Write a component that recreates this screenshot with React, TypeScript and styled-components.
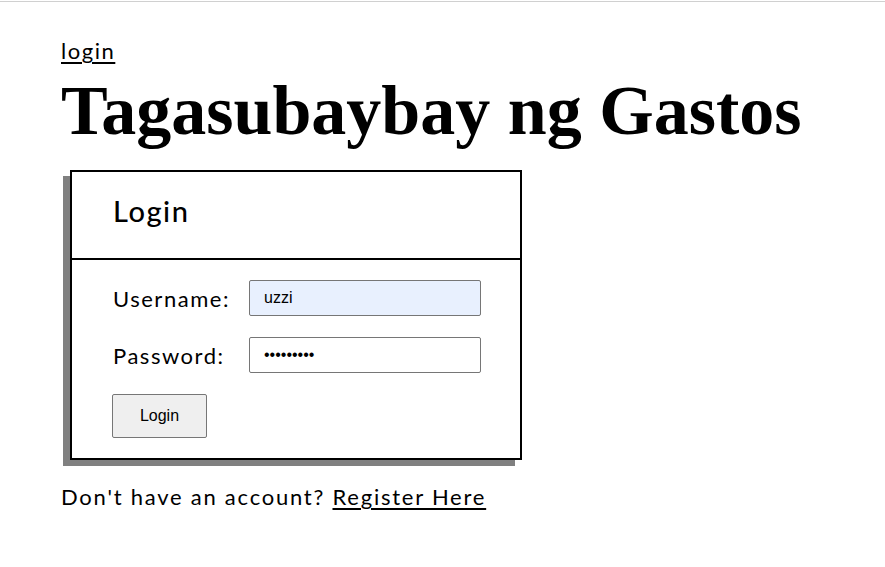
import React from "react";
import styled, { createGlobalStyle } from "styled-components";

const Global = createGlobalStyle`
  html, body { margin: 0; padding: 0; background: #fff; }
  body { border-top: 1px solid #d0d0d0; margin-top: 1px; }
`;

const Page = styled.main`
  padding: 34px 0 0 61px;
  font-family: "Lato", "Open Sans", sans-serif;
  letter-spacing: 0.095em;
  color: #000;
`;

const NavLink = styled.a`
  display: inline-block;
  font-size: 22px;
  line-height: 30px;
  letter-spacing: 0.07em;
  color: #000;
  text-decoration: underline;
  text-underline-offset: 3px;
`;

const Title = styled.h1`
  margin: 9px 0 23px 0;
  font-family: "Liberation Serif", "DejaVu Serif", serif;
  font-weight: 700;
  font-size: 70px;
  line-height: 72px;
  letter-spacing: 0;
`;

const Card = styled.section`
  margin-left: 9px;
  width: 448px;
  border: 2px solid #000;
  box-shadow: -7px 6px 0 #808080;
  background: #fff;
`;

const CardHeader = styled.header`
  box-sizing: border-box;
  height: 88px;
  display: flex;
  align-items: center;
  padding: 0 0 10px 41px;
  border-bottom: 2px solid #000;
  font-size: 29px;
  font-weight: 500;
`;

const CardBody = styled.form`
  padding: 20px 0 20px 40px;
  display: flex;
  flex-direction: column;
  gap: 21px;
`;

const Row = styled.label`
  display: flex;
  align-items: center;
  font-size: 22px;
  padding-left: 1px;
`;

const LabelText = styled.span`
  width: 136px;
`;

const Input = styled.input<{ $autofill?: boolean }>`
  box-sizing: border-box;
  width: 232px;
  height: 36px;
  padding: 0 14px;
  border: 1px solid #767676;
  border-radius: 2px;
  background: ${(p) => (p.$autofill ? "#e8f0fe" : "#fff")};
  font-family: "Liberation Sans", Arial, sans-serif;
  font-size: 16px;
  letter-spacing: 0;
  color: #000;
  outline: none;
`;

const Button = styled.button`
  box-sizing: border-box;
  width: 95px;
  height: 44px;
  background: #efefef;
  border: 1px solid #767676;
  border-radius: 2px;
  font-family: "Liberation Sans", Arial, sans-serif;
  font-size: 16px;
  letter-spacing: 0;
  color: #000;
`;

const Footer = styled.p`
  margin: 23px 0 0 0;
  font-size: 22px;
  letter-spacing: 0.08em;
`;

const FooterLink = styled.a`
  color: #000;
  text-decoration: underline;
  text-underline-offset: 3px;
`;

export default function App() {
  return (
    <>
      <Global />
      <Page>
        <NavLink href="#">login</NavLink>
        <Title>Tagasubaybay ng Gastos</Title>
        <Card>
          <CardHeader>Login</CardHeader>
          <CardBody onSubmit={(e) => e.preventDefault()}>
            <Row>
              <LabelText>Username:</LabelText>
              <Input $autofill defaultValue="uzzi" />
            </Row>
            <Row>
              <LabelText>Password:</LabelText>
              <Input type="password" defaultValue="123456789" />
            </Row>
            <div>
              <Button type="submit">Login</Button>
            </div>
          </CardBody>
        </Card>
        <Footer>
          Don't have an account? <FooterLink href="#">Register Here</FooterLink>
        </Footer>
      </Page>
    </>
  );
}
